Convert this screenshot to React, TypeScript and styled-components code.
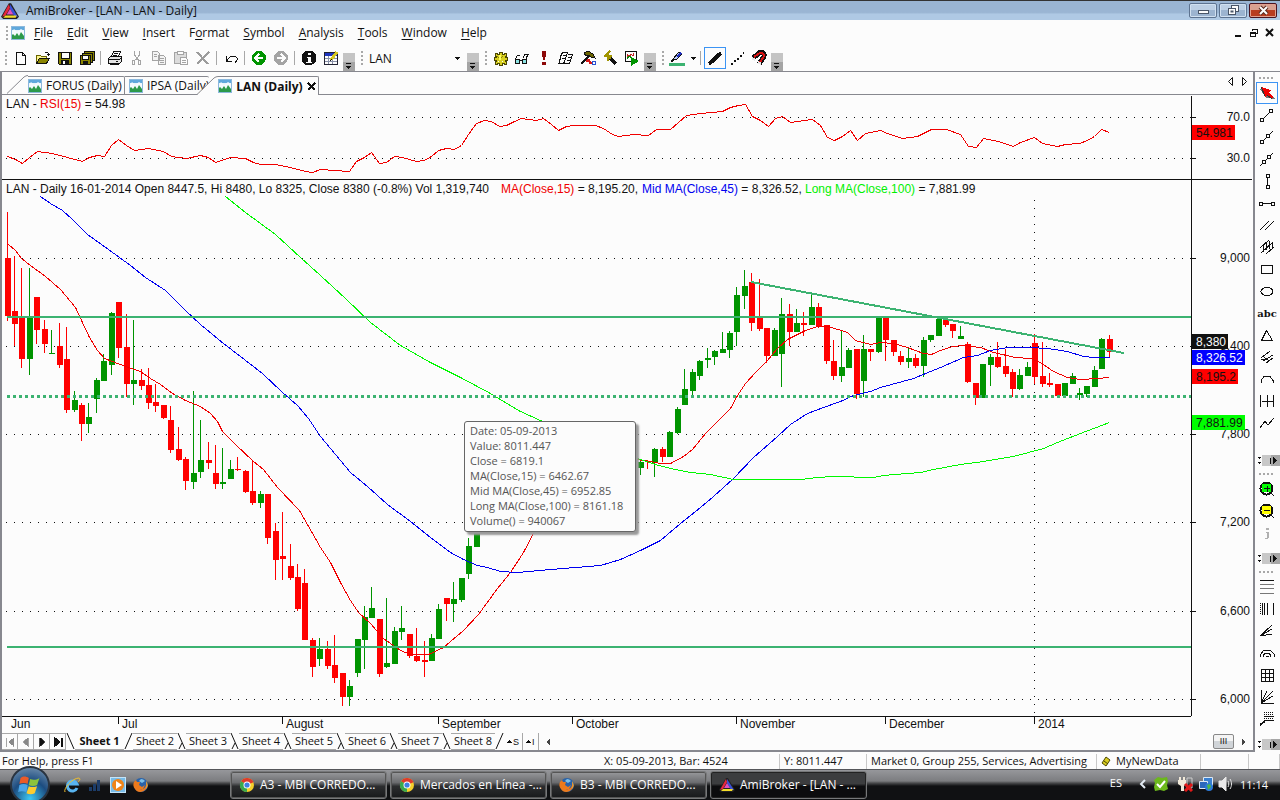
import { ReactNode, useState } from "react";
import styled, { createGlobalStyle } from "styled-components";

type Candle = [high: number, top: number, bottom: number, low: number, up: 0 | 1];

const menus = [
  ["", "F", "ile"],
  ["", "E", "dit"],
  ["", "V", "iew"],
  ["", "I", "nsert"],
  ["F", "o", "rmat"],
  ["", "S", "ymbol"],
  ["", "A", "nalysis"],
  ["", "T", "ools"],
  ["", "W", "indow"],
  ["", "H", "elp"],
];

const sheets = [1, 2, 3, 4, 5, 6, 7, 8].map((n) => `Sheet ${n}`);

// y of high, body top, body bottom, low; last value is 1 for an up day
const firstCandles: Candle[] = [
  [212, 258, 316, 321, 0], [256, 311, 324, 346, 0], [268, 317, 359, 368, 0], [268, 317, 359, 375, 1],
  [297, 297, 330, 344, 0], [320, 329, 344, 353, 0], [330, 353, 354, 354, 1], [323, 346, 365, 368, 0],
  [327, 359, 410, 413, 0], [391, 400, 410, 412, 1], [403, 405, 424, 441, 0], [403, 417, 424, 433, 1],
  [378, 380, 399, 413, 1], [354, 361, 381, 381, 1], [312, 313, 365, 375, 1], [302, 302, 348, 358, 0],
  [314, 347, 384, 397, 0], [320, 380, 384, 405, 1], [369, 380, 386, 390, 0], [368, 385, 403, 409, 0],
  [384, 402, 406, 412, 0], [405, 405, 418, 419, 0], [406, 420, 450, 453, 0], [427, 449, 460, 461, 0],
  [457, 459, 481, 490, 0], [391, 473, 482, 489, 1], [420, 460, 472, 478, 1], [442, 460, 463, 469, 0],
  [445, 473, 484, 489, 0], [448, 482, 484, 489, 1], [460, 469, 479, 479, 1], [457, 469, 470, 471, 0],
  [470, 471, 492, 493, 0], [460, 491, 503, 505, 0], [491, 494, 503, 508, 1], [494, 494, 538, 544, 0],
  [523, 531, 560, 580, 0], [512, 556, 559, 580, 0], [544, 566, 578, 580, 0], [564, 577, 609, 611, 0],
  [569, 583, 640, 640, 0], [638, 640, 667, 677, 0], [638, 649, 659, 666, 1], [641, 649, 666, 669, 0],
  [635, 665, 678, 683, 0], [673, 673, 697, 706, 0], [680, 686, 697, 706, 1], [639, 639, 673, 677, 1],
  [606, 617, 640, 669, 1], [587, 608, 618, 618, 1], [619, 619, 674, 677, 0], [598, 663, 667, 668, 1],
  [627, 631, 664, 664, 1], [606, 628, 632, 640, 1], [634, 634, 656, 658, 0], [628, 656, 661, 662, 0],
  [641, 660, 662, 677, 0], [634, 638, 661, 661, 1], [604, 609, 639, 639, 1], [598, 598, 604, 621, 0],
  [582, 599, 604, 622, 1], [578, 578, 600, 602, 1], [538, 546, 574, 579, 1], [500, 500, 547, 547, 1],
];

const lastCandles: Candle[] = [
  [460, 462, 468, 475, 1], [460, 461, 462, 469, 0], [448, 449, 463, 477, 1], [447, 449, 457, 462, 0],
  [431, 432, 457, 457, 1], [407, 409, 433, 434, 1], [369, 389, 405, 405, 1], [369, 372, 391, 396, 1],
  [360, 361, 376, 380, 1], [348, 358, 360, 368, 1], [350, 351, 357, 365, 1], [332, 349, 353, 353, 1],
  [331, 333, 350, 358, 1], [287, 295, 332, 346, 1], [270, 286, 296, 309, 1], [273, 282, 323, 331, 0],
  [279, 317, 329, 331, 0], [328, 328, 356, 363, 0], [328, 330, 356, 356, 1], [298, 314, 354, 387, 1],
  [304, 314, 332, 346, 0], [309, 323, 332, 332, 1], [312, 323, 325, 336, 0], [295, 307, 325, 325, 1],
  [303, 307, 327, 328, 0], [325, 325, 361, 364, 0], [340, 361, 376, 380, 0], [330, 367, 376, 382, 1],
  [348, 350, 368, 368, 1], [349, 349, 394, 399, 0], [335, 349, 381, 397, 1], [349, 349, 352, 361, 0],
  [318, 318, 352, 353, 1], [318, 318, 340, 361, 0], [340, 340, 352, 356, 0], [351, 356, 362, 365, 0],
  [347, 358, 362, 368, 1], [354, 358, 366, 368, 0], [337, 340, 366, 377, 1], [335, 335, 340, 342, 1],
  [319, 319, 336, 336, 1], [319, 319, 325, 327, 0], [324, 324, 331, 338, 0], [326, 336, 339, 339, 1],
  [342, 344, 382, 383, 0], [383, 383, 398, 405, 0], [364, 364, 398, 398, 1], [354, 357, 365, 386, 1],
  [342, 357, 367, 368, 0], [349, 366, 374, 377, 0], [369, 372, 389, 397, 0], [369, 375, 389, 390, 1],
  [362, 367, 376, 376, 1], [334, 343, 377, 384, 0], [342, 376, 384, 387, 0], [373, 383, 385, 387, 0],
  [384, 384, 396, 397, 0], [383, 383, 396, 396, 1], [373, 376, 384, 384, 1], [388, 393, 395, 400, 1],
  [386, 386, 394, 397, 1], [366, 370, 387, 387, 1], [338, 339, 369, 369, 1], [335, 339, 352, 357, 0],
];

const LAST_START = 85;

const ma15 =
  "8,244 15,250 21,258 30,265 45,276 60,289 75,307 82,322 89,337 97,350 104,358 112,361 125,366 140,371 150,378 160,384 172,393 185,400 200,406 210,413 217,421 222,431 235,444 253,461 263,469 277,487 299,510 320,547 330,562 340,582 350,600 358,612 370,623 383,638 400,650 410,654 428,654 443,647 463,630 478,614 497,588 510,572 523,552 534,531 560,490 600,462 636,459 650,461 660,463 670,463 683,456 692,449 705,433 720,418 730,408 737,395 745,383 755,372 767,360 777,348 787,339 805,330 817,326 828,326 847,332 855,340 870,344 880,342 893,343 907,347 923,353 931,354 940,350 952,346 963,345 980,347 993,352 1015,357 1030,358 1040,362 1053,371 1067,377 1080,379 1097,378 1109,377";
const ma45 =
  "40,196 50,203 62,210 72,219 82,229 87,234 108,249 130,265 145,277 165,290 185,310 200,324 223,343 240,356 262,373 282,392 297,405 308,418 320,436 340,460 350,472 367,486 387,504 410,521 430,537 450,552 463,559 477,565 487,567 500,571 517,572 550,569 600,565 620,559 640,550 660,540 680,523 700,507 713,496 733,478 753,457 777,436 790,424 807,413 823,407 840,401 853,395 870,391 880,387 913,378 930,371 940,367 963,357 977,355 990,350 1007,347 1030,347 1047,348 1067,351 1083,356 1093,357 1109,357";
const ma100 =
  "225,196 245,212 275,234 300,257 320,275 345,298 370,322 400,345 430,362 460,377 490,393 518,410 542,421 600,445 643,460 655,464 670,468 690,472 710,474 733,479 800,479 817,477 833,476 873,477 883,475 907,473 920,472 933,469 960,464 983,461 1013,456 1043,448 1057,442 1080,433 1109,422";
const rsi =
  "7,156 15,159 22,163 29,157 37,151 52,153 67,157 82,161 89,157 97,155 104,156 111,145 118,139 126,145 134,150 148,148 163,151 171,156 186,158 200,155 208,157 215,162 230,157 245,158 253,162 260,164 275,164 290,167 305,171 312,172 320,169 334,170 349,171 356,161 364,157 371,152 379,163 386,162 394,156 402,157 416,161 424,160 431,156 438,150 446,148 454,149 461,145 468,134 476,123 484,120 491,121 499,126 506,125 514,121 521,118 536,120 543,118 551,124 558,130 566,126 573,125 595,125 603,128 612,134 618,136 633,134 648,135 656,129 670,129 678,122 686,115 700,113 722,111 730,107 738,105 745,104 752,116 760,120 768,126 775,118 782,116 790,122 804,120 812,119 820,125 827,137 834,140 842,136 850,130 857,140 865,133 880,130 887,133 902,138 917,136 931,129 946,129 960,134 968,146 976,147 983,138 998,141 1013,146 1020,142 1034,137 1042,143 1057,146 1065,144 1079,143 1087,140 1094,136 1101,129 1109,132";

const priceLevels: [number, string][] = [
  [258, "9,000"],
  [346, "8,400"],
  [434, "7,800"],
  [522, "7,200"],
  [611, "6,600"],
  [699, "6,000"],
];

const months: [number, string][] = [
  [118, "Jul"],
  [282, "August"],
  [438, "September"],
  [572, "October"],
  [736, "November"],
  [885, "December"],
  [1034, "2014"],
];

const badges: [number, number, string, string, string][] = [
  [125, 43, "54.981", "#f00", "#111"],
  [334, 36, "8,380", "#111", "#fcfcfc"],
  [350, 53, "8,326.52", "#00f", "#fcfcfc"],
  [369, 46, "8,195.2", "#f00", "#111"],
  [415, 53, "7,881.99", "#0f0", "#111"],
];

const tipLines = [
  "Date: 05-09-2013",
  "Value: 8011.447",
  "Close = 6819.1",
  "MA(Close,15) = 6462.67",
  "Mid MA(Close,45) = 6952.85",
  "Long MA(Close,100) = 8161.18",
  "Volume() = 940067",
];

const Icon = ({ size = 16, children }: { size?: number; children: ReactNode }) => (
  <svg width={size} height={size} viewBox="0 0 16 16" fill="none" stroke="#111" shapeRendering="crispEdges" aria-hidden="true">
    {children}
  </svg>
);

const ChartIcon = () => (
  <svg width="14" height="14" viewBox="0 0 14 14" aria-hidden="true">
    <rect x=".5" y=".5" width="13" height="13" fill="#e8f4fb" stroke="#8cb8dc" />
    <path d="M1 1h12v3H1z" fill="#5fa8dc" />
    <path d="M1 6l2-3 3 3 4-3 3 2v5H1z" fill="#f4fafe" />
    <path d="M1 13V9l1-1 2 2 2-3 2 3 2-4 3 4v3z" fill="#2c9a4b" />
  </svg>
);

const Prism = ({ size = 16 }: { size?: number }) => (
  <svg width={size} height={size} viewBox="0 0 16 16" aria-hidden="true">
    <path d="M7 1h2l7 12-2 2H2l-2-2z" fill="#222" />
    <path d="M7 2L1 13l3-1 4-7z" fill="#e8283c" />
    <path d="M8 2l7 11h-3L8 6z" fill="#3a50d8" />
    <path d="M2 14l2-2h10l-1 2z" fill="#f4dc28" />
    <path d="M8 6l3 5H5z" fill="#e050c0" />
  </svg>
);

const Chrome = () => (
  <svg width="16" height="16" viewBox="0 0 16 16" aria-hidden="true">
    <circle cx="8" cy="8" r="7" fill="#f6cf2a" />
    <path d="M8 8L2 4.300a7 7 0 0 1 12.500 1z" fill="#de3b2c" />
    <path d="M8 8v7A7 7 0 0 1 2 4.300z" fill="#39a84e" />
    <circle cx="8" cy="8" r="3.500" fill="#fff" />
    <circle cx="8" cy="8" r="2.600" fill="#3f7fe0" />
  </svg>
);

const Firefox = () => (
  <svg width="16" height="16" viewBox="0 0 16 16" aria-hidden="true">
    <circle cx="8" cy="8" r="7" fill="#2a62a8" />
    <path d="M8 2a5 5 0 0 1 4 2L9 6 6 4z" fill="#7cc0ea" />
    <path d="M1 5l2-2 1 2 3 0-1 3 3 2 3-2-2 4-3 0c4 1 7-2 6-8 2 3 2 6 0 8-3 4-9 4-11 0C0 10 0 7 1 5z" fill="#ec7a1c" />
    <path d="M13 4c2 3 2 6 0 8 1-2 1-5 0-8z" fill="#f8c43c" />
  </svg>
);

const Overflow = () => (
  <OverflowButton aria-label="Toolbar options">
    <svg width="8" height="8" viewBox="0 0 8 8" shapeRendering="crispEdges">
      <path d="M1 0h5v1H1zM1 3h5v1H5v1H4v1H3V5H2V4H1z" fill="#111" />
    </svg>
  </OverflowButton>
);

const ToolboxOverflow = () => (
  <ToolboxMore aria-label="Toolbox options">
    <svg width="24" height="11" viewBox="0 0 24 11" shapeRendering="crispEdges">
      <path d="M6 0h9v11H6z" fill="#c8c8c8" />
      <path d="M15 0h9v11h-9z" fill="#a6a6a6" />
      <path d="M2 2h3v1H4v1H3V3H2zM2 7h3v1H4v1H3V8H2zM14 3h1v6h-1zM17 2h1v1h1v1h1v1h1v1h-1v1h-1v1h-1v1h-1z" fill="#111" />
    </svg>
  </ToolboxMore>
);

const fileTools: [string, ReactNode][] = [
  ["New", <path d="M3.500 2.500h6l3 3v9h-9zM9.500 2.500v3h3" />],
  ["Open", <g><path d="M1.500 13.500v-8h4l1 1h5v2" fill="#fcf48c" stroke="#6a6400" /><path d="M1.500 13.500l3-5h10l-3 5z" fill="#8a8400" /><path d="M9.500 3.500l1-1h2l1 1v2M11.500 4.500h3" /></g>],
  ["Save", <g><path d="M1.500 2.500h13v12h-12l-1-1z" fill="#8a8400" /><path d="M4.500 2.500h8v6h-8z" fill="#fcfcfc" /><path d="M4.500 10.500h7v4h-7z" fill="#111" /><path d="M6 11h2v3H6z" fill="#fcfcfc" stroke="none" /></g>],
  ["Save all", <g fill="#8a8400"><path d="M5.500 1.500h10v9h-10z" /><path d="M3.500 3.500h10v9h-10z" /><path d="M1.500 5.500h10v9h-10z" /><path d="M3.500 5.500h6v4h-6z" fill="#fcfcfc" /><path d="M4.500 11.500h4v3h-4z" fill="#111" /></g>],
];

const editTools: [string, ReactNode][] = [
  ["Print", <g><path d="M4.500 6.500l2-5h7l-2 5M7 3.500h4M6 5.500h4" /><path d="M1.500 8.500l2-2h11v5l-2 2h-11z" fill="#e4e4e4" /><path d="M1.500 9.500h11l2-2M3.500 13.500v1h8v-1M9 11.500h2" /></g>],
  ["Cut", <path stroke="#a4a4a4" d="M5.500 1v4l4 5M10.500 1v4l-4 5M3.500 10.500h2v4h-2zM9.500 10.500h2v4h-2z" />],
  ["Copy", <path stroke="#a4a4a4" fill="#f4f4f4" d="M1.500 1.500h5l2 2v7h-7zM7.500 5.500h5l2 2v7h-7zM3 4.500h3M3 6.500h3M9 8.500h4M9 10.500h4M9 12.500h4" />],
  ["Paste", <g stroke="#a4a4a4"><path d="M1.500 2.500h12v11h-12z" fill="#dcdcdc" /><path d="M4.500 1.500h6v3h-6z" fill="#fcfcfc" /><path d="M7.500 7.500h5l2 2v5h-7zM9 10.500h4M9 12.500h4" fill="#fcfcfc" /></g>],
  ["Delete", <path stroke="#9c9c9c" strokeWidth="2" d="M2 2l11 12M14 2L2 14" />],
];

const infoTools: [string, ReactNode][] = [
  ["Information", <g><circle cx="8" cy="8" r="7" fill="#111" /><path d="M7 3h3v2H7zM6 7h4v5h1v1H5v-1h2V8H6z" fill="#fcfcfc" stroke="none" /></g>],
  ["Quote editor", <g><path d="M1.500 2.500h13v12h-13z" fill="#fcfcfc" stroke="#223" /><path d="M2 3h12v3H2z" fill="#1d34c0" stroke="none" /><path d="M5.500 6v8M9.500 6v8M2 8.500h12M2 11.500h12" stroke="#8890a8" /><path d="M8 10l6-8" stroke="#d8c820" strokeWidth="3" /><path d="M7 11l2-2" /></g>],
];

const analysisTools: [string, ReactNode][] = [
  ["Settings", <g><path d="M7 2h3v2h2V3h2v3h-1v1h2v3h-2v1h1v3h-2v-1h-2v2H7v-2H5v1H3v-3h1v-1H2V7h2V6H3V3h2v1h2z" fill="#d8d020" stroke="#4a4600" /><path d="M5 6l3 3M11 6l-3 3" stroke="#8a8400" /><path d="M8 5v5" stroke="#fcfc60" strokeWidth="2" /><path d="M6 11h1v1H6zM10 11h1v1h-1z" fill="#fcfcfc" stroke="none" /></g>],
  ["Explore", <g fill="#8ce4e4"><path d="M1.500 9.500h4v4h-4zM8.500 9.500h4v4h-4z" /><path d="M6 10.500h2M1.500 9l2-4h2M9 8l2-4h2v2M12 9l2-5h1" fill="none" /></g>],
  ["Commentary", <path d="M6 1h4v3L9 10H7L6 4zM6 12h4v3H6z" fill="#8c0808" stroke="none" />],
  ["Report", <path d="M3.500 3.500l2-1h4l-3 9-2 2H1zM9.500 4.500h5l-3 9H5l2-2M5 5.500h3M4 8.500h3M10 7.500h3M9 10.500h3" fill="#fcfcfc" />],
  ["Formula", <g><path d="M4 3l4-2 5 3 2 4-4-1-3-2-2 1z" fill="#6a6400" /><path d="M9 6l-8 8" strokeWidth="2" /><path d="M6 11l3-1 1 3h3" stroke="#d81818" strokeWidth="2" /><path d="M12.500 11.500h3v3h-3z" stroke="#2850d0" /></g>],
  ["Wizard", <g><path d="M7 7l7 7" strokeWidth="3" /><path d="M6 3v8M2 6h8M4 4l5 5M8 1l-3 3" stroke="#a09400" strokeWidth="2" /></g>],
  ["Run", <g><path d="M1.500 1.500h11v10h-11z" fill="#fcfcfc" /><path d="M3 7V4l2 3 2-3 2 2 1-3" stroke="#c02020" /><path d="M3 9l2-3 3 2" stroke="#008c00" /><path d="M7 7l8 4-8 5z" fill="#009400" stroke="none" /></g>],
];

const handle = (x: number, y: number) => <rect x={x - 1.5} y={y - 1.5} width="3" height="3" fill="#fcfcfc" />;

const drawTools: [string, ReactNode][] = [
  ["Select", <g><path d="M5 3l10 11M2 4l7 9" stroke="#777" strokeWidth="2" /><path d="M2 2l10 3-2 3 4 4-2 2-4-4-2 2z" fill="#f00000" stroke="none" /><path d="M2 2l4 9M8 10l5 4" stroke="#333" /></g>],
  ["Trend line", <g><path d="M3 13l9-9" />{handle(3, 13)}{handle(12, 4)}</g>],
  ["Ray", <g><path d="M3 13L14 2" />{handle(3, 13)}{handle(9, 7)}</g>],
  ["Extended line", <g><path d="M1 15L14 2" />{handle(5, 11)}{handle(10, 6)}</g>],
  ["Vertical line", <g><path d="M8.500 2v12" />{handle(9, 3)}{handle(9, 14)}</g>],
  ["Horizontal line", <g><path d="M2 8.500h12" />{handle(2, 9)}{handle(14, 9)}</g>],
  ["Parallel lines", <path d="M1 13L10 4M6 13l9-9" />],
  ["Regression channel", <path d="M1 9l9-8M2 14L14 3M7 15l8-7M4 6v7M7 4v7M10 2v8M13 3v7" />],
  ["Rectangle", <path d="M2.500 4.500h11v8h-11z" />],
  ["Ellipse", <ellipse cx="8" cy="8.500" rx="6" ry="4" />],
  ["Text", null],
  ["Triangle", <path d="M2.500 13.500l5-10 6 10z" />],
  ["Pitchfork", <path d="M2 9l9-7M2 10.500h5M4 12l10-6M7 14l7-5M5 8l5 4" />],
  ["Arc", <path d="M2 11.500V9.500l3-4h6l3 4v2" />],
  ["Cycles", <path d="M1.500 2v12M8.500 2v12M14.500 2v12M3 8.500h5M9 8.500h5" strokeDasharray="12 0" />],
  ["Zig zag", <path d="M1 13l5-7 3 4 6-7" />],
];

const zoomTools: [string, ReactNode][] = [
  ["Zoom in", <g><circle cx="7.500" cy="7.500" r="6" strokeWidth="2" /><rect x="3" y="3" width="9" height="8" fill="#0f0" stroke="none" /><path d="M5 7.500h6M8 4.500v6M12 12l3 3" /></g>],
  ["Zoom out", <g><circle cx="7.500" cy="7.500" r="6" strokeWidth="2" /><rect x="3" y="3" width="9" height="8" fill="#ff0" stroke="none" /><path d="M5 7.500h6M12 12l3 3" /></g>],
  ["Inspect", <path d="M7 3h3v2H7zM7 7h3v5l-1 2H6v-1h2V8H7z" fill="#b0b0b0" stroke="none" />],
];

const fibTools: [string, ReactNode][] = [
  ["Retracement", <g><path d="M1 1.500h14" /><path d="M1 5.500h14M1 9.500h14M1 14.500h14" stroke="#777" /></g>],
  ["Time zones", <g><path d="M1.500 2v12" strokeDasharray="1 1" /><path d="M3.500 2v12M5.500 2v12M8.500 2v12M14.500 2v12" /></g>],
  ["Fan", <path d="M1 13L13 2M1 13l12-7M1 13l12-2" />],
  ["Arcs", <path d="M1.500 12V9.500l3-4h7l4 4V12M4.500 12v-2l2-2h3l2 2v2M7.500 12v-1h2v1" />],
  ["Gann square", <path d="M2.500 2.500h12v12h-12zM6.500 2v12M10.500 2v12M2 6.500h12M2 10.500h12" />],
  ["Gann fan", <path d="M2.500 1v13.500H15M2 14L14 2M2 14L8 2M2 14l12-7" />],
  ["Callout", <g><path d="M5 1.500h10M5 3.500h10M5 7.500h10" strokeDasharray="1 1" /><path d="M5 5.500h10M5 9.500h10" /><path d="M1 14l5-4" strokeWidth="2" /></g>],
];

const Tools = ({ items }: { items: [string, ReactNode][] }) => (
  <>
    {items.map(([name, art]) => (
      <ToolButton key={name} aria-label={name} $active={name === "Select"}>
        {art ? <Icon>{art}</Icon> : <Abc>abc</Abc>}
      </ToolButton>
    ))}
  </>
);

const CandleBars = ({ data, start }: { data: Candle[]; start: number }) => (
  <>
    {data.map(([high, top, bottom, low, up], i) => {
      const x = Math.floor(7 + (start + i) * 7.448);
      return (
        <g key={i} fill={up ? "#009400" : "#f00"}>
          <rect x={x} y={high} width="1" height={Math.max(1, low - high)} />
          <rect x={x - 2} y={top} width="6" height={Math.max(1, bottom - top)} />
        </g>
      );
    })}
  </>
);

const Chart = () => (
  <ChartSvg viewBox="2 95 1251 638" role="img" aria-label="LAN daily price chart">
    <g stroke="#111" strokeDasharray="1 7" shapeRendering="crispEdges">
      {[117, 158, ...priceLevels.map(([y]) => y)].map((y) => (
        <path key={y} d={`M6 ${y}.500H1191`} />
      ))}
      <path d="M1034.500 200V716" />
    </g>
    <g shapeRendering="crispEdges">
      <CandleBars data={firstCandles} start={0} />
      <CandleBars data={lastCandles} start={LAST_START} />
      <g fill="none" transform="translate(.5 .5)">
        <polyline points={rsi} stroke="#f00000" />
        <polyline points={ma15} stroke="#f00000" />
        <polyline points={ma45} stroke="#0000f0" />
        <polyline points={ma100} stroke="#00f800" />
      </g>
      <g stroke="#3cb371" strokeWidth="2">
        <path d="M7 317H1191M7 647H1191M751 282L1124 353" />
        <path d="M7 396.500H1191" strokeWidth="3" strokeDasharray="3 3" />
      </g>
      <g stroke="#111">
        <path d="M1191.500 96V716M2 179.500H1252M2 716.500H1191" />
        {[117, 158, ...priceLevels.map(([y]) => y)].map((y) => (
          <path key={y} d={`M1192 ${y}.500h4`} />
        ))}
        {months.map(([x]) => (
          <path key={x} d={`M${x}.500 717v7`} />
        ))}
      </g>
    </g>
    <text x="6" y="108">
      LAN - <tspan fill="#f00000">RSI(15)</tspan> = 54.98
    </text>
    <text x="6" y="193">LAN - Daily 16-01-2014 Open 8447.5, Hi 8480, Lo 8325, Close 8380 (-0.8%) Vol 1,319,740</text>
    <text x="501" y="193"><tspan fill="#f00000">MA(Close,15)</tspan> = 8,195.20,</text>
    <text x="642" y="193"><tspan fill="#0000f0">Mid MA(Close,45)</tspan> = 8,326.52,</text>
    <text x="805" y="193"><tspan fill="#00f000">Long MA(Close,100)</tspan> = 7,881.99</text>
    <g textAnchor="end">
      <text x="1250" y="121">70.0</text>
      <text x="1250" y="162">30.0</text>
      {priceLevels.map(([y, label]) => (
        <text key={label} x="1250" y={y + 4}>{label}</text>
      ))}
    </g>
    {badges.map(([y, width, label, bg, color]) => (
      <g key={label}>
        <rect x="1192" y={y} width={width} height="15" fill={bg} />
        <text x="1196" y={y + 12} fill={color}>{label}</text>
      </g>
    ))}
    <text x="11" y="728">Jun</text>
    {months.map(([x, label]) => (
      <text key={label} x={x + 4} y="728">{label}</text>
    ))}
  </ChartSvg>
);

const SheetEdge = ({ kind }: { kind: "left" | "right" | "both" }) => (
  <svg width="9" height="17" viewBox="0 0 9 17" stroke="#111" fill="none" aria-hidden="true">
    {kind !== "right" && <path d="M1 0l7 16" />}
    {kind === "right" && <path d="M8 0L1 16" />}
    {kind === "both" && <path d="M5 10L2 16" />}
  </svg>
);

export default function App() {
  const [sheet, setSheet] = useState(0);

  return (
    <Window>
      <GlobalStyle />
      <TitleBar>
        <Prism size={18} />
        <Title>AmiBroker - [LAN - LAN - Daily]</Title>
        <CaptionButton aria-label="Minimize">
          <svg width="13" height="11" viewBox="0 0 13 11"><rect x="1.500" y="5.500" width="10" height="3" fill="#fcfcfc" stroke="#4a5668" /></svg>
        </CaptionButton>
        <CaptionButton aria-label="Restore">
          <svg width="13" height="11" viewBox="0 0 13 11" fill="#fcfcfc" stroke="#4a5668"><rect x="4.500" y=".5" width="7" height="6" /><rect x="1.500" y="3.500" width="7" height="6" /><rect x="4" y="6" width="2" height="1" /></svg>
        </CaptionButton>
        <CaptionButton aria-label="Close" $danger>
          <svg width="13" height="11" viewBox="0 0 13 11"><path d="M3 2l7 7M10 2L3 9" stroke="#5a2a20" strokeWidth="4" /><path d="M3 2l7 7M10 2L3 9" stroke="#fcfcfc" strokeWidth="2" /></svg>
        </CaptionButton>
      </TitleBar>

      <MenuBar>
        <Grip />
        <ChartIcon />
        <MenuList>
          {menus.map(([before, key, after]) => (
            <MenuButton key={after}>{before}<u>{key}</u>{after}</MenuButton>
          ))}
        </MenuList>
        <MdiButton aria-label="Minimize chart"><svg width="10" height="10" viewBox="0 0 10 10" stroke="#111" strokeWidth="2"><path d="M2 8h6" /></svg></MdiButton>
        <MdiButton aria-label="Restore chart"><svg width="10" height="10" viewBox="0 0 10 10" fill="none" stroke="#111" shapeRendering="crispEdges"><path d="M3.500 3V1.500h5v4H7M3 1.500h6M1.500 4.500h5v4h-5zM1 5.500h6" /></svg></MdiButton>
        <MdiButton aria-label="Close chart"><svg width="10" height="10" viewBox="0 0 10 10" stroke="#111" strokeWidth="2"><path d="M1 1l7 7M8 1L1 8" /></svg></MdiButton>
      </MenuBar>

      <ToolBar>
        <Grip />
        <Tools items={fileTools} />
        <Separator />
        <Tools items={editTools} />
        <Separator />
        <ToolButton aria-label="Undo"><Icon><path d="M3.500 6v5.500H9M4 11l1-2 3-3h4l2 2v2l-2 3" /></Icon></ToolButton>
        <Separator />
        <ToolButton aria-label="Back"><Icon><circle cx="8" cy="8" r="7" fill="#009400" stroke="none" /><path d="M12 8H5M8 4L4 8l4 4" stroke="#fcfcfc" strokeWidth="2" /></Icon></ToolButton>
        <ToolButton aria-label="Forward"><Icon><circle cx="8" cy="8" r="7" fill="#a4a4a4" stroke="none" /><path d="M4 8h7M8 4l4 4-4 4" stroke="#fcfcfc" strokeWidth="2" /></Icon></ToolButton>
        <Separator />
        <Tools items={infoTools} />
        <Overflow />
        <Grip />
        <SymbolBox>
          <select aria-label="Symbol" defaultValue="LAN">
            <option>LAN</option>
          </select>
          <Arrow />
        </SymbolBox>
        <Overflow />
        <Grip />
        <Tools items={analysisTools} />
        <Overflow />
        <Grip />
        <ToolButton aria-label="Line colour"><Icon><path d="M4 9l6-7 3 2-6 6z" fill="#b8c8f8" /><path d="M8 7l4-4" stroke="#2030c0" strokeWidth="2" /><path d="M2 11l3-1" strokeWidth="2" /><path d="M0 14.500h16" stroke="#3cb371" strokeWidth="3" /></Icon></ToolButton>
        <ArrowButton aria-label="Choose colour"><Arrow /></ArrowButton>
        <Separator />
        <ToolButton aria-label="Thick line" $active><Icon><path d="M2 14L14 3" strokeWidth="4" /></Icon></ToolButton>
        <ToolButton aria-label="Dotted line"><Icon><path d="M2 13h2v2H2zM5 10h2v2H5zM8 8h2v2H8zM11 5h2v2h-2zM14 2h1v2h-1z" fill="#111" stroke="none" /></Icon></ToolButton>
        <ToolButton aria-label="Magnet"><Icon><path d="M2 8l5-4c4-4 8 0 5 4l-4 6" strokeWidth="5" /><path d="M3 7l4-3c4-3 7 0 5 4l-3 4" stroke="#d81010" strokeWidth="2" /><path d="M1 8l3 2M7 12l3 2" stroke="#e8e8e8" strokeWidth="2" /></Icon></ToolButton>
        <Overflow />
      </ToolBar>

      <Main>
        <Document>
          <DocTabs>
            <DocTab>
              <Slant />
              <TabFace><ChartIcon />FORUS (Daily)</TabFace>
            </DocTab>
            <DocTab>
              <TabFace $second><ChartIcon />IPSA (Daily)</TabFace>
            </DocTab>
            <DocTab $active>
              <Slant />
              <TabFace><ChartIcon />LAN (Daily)
                <svg width="9" height="9" viewBox="0 0 9 9" stroke="#111" strokeWidth="2" shapeRendering="crispEdges" aria-hidden="true"><path d="M1 1l7 7M8 1L1 8" /></svg>
              </TabFace>
            </DocTab>
            <TabArrows>
              <button aria-label="Previous tab"><svg width="7" height="9" viewBox="0 0 7 9" fill="none" stroke="#111"><path d="M5.500 .5v8l-4-4z" /></svg></button>
              <button aria-label="Next tab"><svg width="7" height="9" viewBox="0 0 7 9" fill="none" stroke="#111"><path d="M1.500 .5v8l4-4z" /></svg></button>
            </TabArrows>
          </DocTabs>

          <ChartArea>
            <Chart />
            <DataTip>
              {tipLines.map((line) => <p key={line}>{line}</p>)}
            </DataTip>
          </ChartArea>

          <SheetBar>
            <NavButton aria-label="First sheet" disabled><Icon size={12}><path d="M3 2v12M13 2L6 8l7 6z" fill="#888" stroke="#888" /></Icon></NavButton>
            <NavButton aria-label="Previous sheet" disabled><Icon size={12}><path d="M11 2L4 8l7 6z" fill="#888" stroke="#888" /></Icon></NavButton>
            <NavButton aria-label="Next sheet"><Icon size={12}><path d="M5 2l7 6-7 6z" fill="#111" /></Icon></NavButton>
            <NavButton aria-label="Last sheet"><Icon size={12}><path d="M3 2l7 6-7 6zM13 2v12" fill="#111" strokeWidth="2" /></Icon></NavButton>
            <SheetEdge kind="left" />
            {sheets.map((name, i) => (
              <SheetCell key={name}>
                <SheetTab $active={i === sheet} onClick={() => setSheet(i)}>{name}</SheetTab>
                <SheetEdge kind={i === sheet || i === sheets.length - 1 ? "right" : "both"} />
              </SheetCell>
            ))}
            <SortButton><Arrow up />S</SortButton>
            <SortButton><Arrow up />I</SortButton>
            <ScrollTrack>
              <button aria-label="Scroll left"><Icon size={10}><path d="M11 3L5 8l6 5z" fill="#444" stroke="none" /></Icon></button>
              <ScrollThumb>III</ScrollThumb>
              <button aria-label="Scroll right"><Icon size={10}><path d="M5 2l6 6-6 6z" fill="#444" stroke="none" /></Icon></button>
            </ScrollTrack>
          </SheetBar>
        </Document>

        <Toolbox>
          <ToolGroup $grow>
            <Dots />
            <Tools items={drawTools} />
            <ToolboxOverflow />
          </ToolGroup>
          <ToolGroup>
            <Dots />
            <Tools items={zoomTools} />
            <ToolboxOverflow />
          </ToolGroup>
          <ToolGroup>
            <Dots />
            <Tools items={fibTools} />
            <ToolboxOverflow />
          </ToolGroup>
        </Toolbox>
      </Main>

      <StatusBar>
        <StatusHelp>For Help, press F1</StatusHelp>
        <StatusCell $width={180}>X: 05-09-2013, Bar: 4524</StatusCell>
        <StatusCell $width={87}>Y: 8011.447</StatusCell>
        <StatusCell $width={230}>Market 0, Group 255, Services, Advertising</StatusCell>
        <StatusCell $width={104}>
          <svg width="10" height="11" viewBox="0 0 10 11" aria-hidden="true"><path d="M5 1l4 3-4 6-4-3z" fill="#d8cc20" stroke="#4a4600" /><path d="M3 5l4 3" stroke="#4a4600" /></svg>
          MyNewData
        </StatusCell>
        <StatusCell $width={48} />
        <StatusCell $width={31} />
      </StatusBar>

      <TaskBar>
        <StartButton aria-label="Start">
          <svg width="26" height="26" viewBox="0 0 22 22">
            <path d="M3 5c3-2 5-1 7 0L9 10c-2-1-4-1-7 0z" fill="#ea5a28" />
            <path d="M11 6c3 1 5 1 8-1l-2 6c-2 1-5 1-7 0z" fill="#8cc43c" />
            <path d="M2 11c2-1 5-1 7 0l-1 6c-3-1-5-1-7 0z" fill="#4aa4e8" />
            <path d="M10 12c2 1 4 1 7 0l-2 6c-2 1-5 1-7 0z" fill="#fccc30" />
          </svg>
        </StartButton>
        <QuickLaunch>
          <button aria-label="Internet Explorer">
            <svg width="18" height="18" viewBox="0 0 18 18" fill="none"><path d="M14 12a5 5 0 1 1 0-4H5" stroke="#58b4f0" strokeWidth="3" /><path d="M2 16C0 13 9 2 16 2c2 1 0 3-1 4" stroke="#f0c030" strokeWidth="1" /></svg>
          </button>
          <button aria-label="Network meter">
            <svg width="14" height="14" viewBox="0 0 14 14" fill="#1c3c68"><path d="M1 9h3v4H1zM5 6h3v7H5zM9 2h3v11H9z" /></svg>
          </button>
          <button aria-label="Media Player">
            <svg width="16" height="16" viewBox="0 0 16 16"><rect x=".5" y=".5" width="15" height="15" fill="#78bce8" stroke="#c4e4f8" /><circle cx="8" cy="8" r="6" fill="#f08418" /><path d="M6 4l6 4-6 4z" fill="#fff" /></svg>
          </button>
          <button aria-label="Firefox"><Firefox /></button>
        </QuickLaunch>
        <TaskList>
          <TaskButton><Chrome />A3 - MBI CORREDO...</TaskButton>
          <TaskButton><Chrome />Mercados en Línea -...</TaskButton>
          <TaskButton><Firefox />B3 - MBI CORREDO...</TaskButton>
          <TaskButton $active><Prism />AmiBroker - [LAN - ...</TaskButton>
        </TaskList>
        <Language>ES</Language>
        <Tray $first>
          <svg width="8" height="10" viewBox="0 0 8 10" fill="none" stroke="#e4ecf4" strokeWidth="2"><path d="M6 1L2 5l4 4" /></svg>
          <svg width="16" height="16" viewBox="0 0 16 16"><path d="M1 4l4-3 4 1 5-1 1 4-1 4 1 4-4 2-4-1-5 1-1-4 1-4z" fill="#6cb81c" /><path d="M4 8l3 3 5-6" stroke="#fff" strokeWidth="2" fill="none" /></svg>
        </Tray>
        <Tray>
          <svg width="17" height="16" viewBox="0 0 17 16"><path d="M2 1h2v3H2zM6 1h2v3H6zM1 4h8v4l-2 2v5H4v-5L1 8z" fill="#f0e8d8" /><path d="M10 2h5v10h-5z" fill="none" stroke="#ccc" /><path d="M8 8l7 7M15 8l-7 7" stroke="#e01818" strokeWidth="3" /></svg>
          <svg width="16" height="16" viewBox="0 0 16 16"><path d="M5.500 1.500h9v8h-9z" fill="#3a80d0" stroke="#dce8f4" /><path d="M1.500 5.500h8v7h-8z" fill="#2c68bc" stroke="#dce8f4" /><circle cx="11" cy="11" r="4" fill="#2c7ad8" /><path d="M9 9l3-1 1 3-3 3z" fill="#4cb848" /></svg>
          <svg width="16" height="16" viewBox="0 0 16 16" fill="none" stroke="#e8e8e8"><path d="M1 5h3l4-4v14l-4-4H1z" fill="#e8e8e8" /><path d="M10 5c1 2 1 4 0 6M12 3c2 3 2 7 0 10" /></svg>
        </Tray>
        <Clock>11:14</Clock>
      </TaskBar>
    </Window>
  );
}

const Arrow = ({ up }: { up?: boolean }) => (
  <svg width="5" height="3" viewBox="0 0 5 3" fill="#111" shapeRendering="crispEdges" aria-hidden="true">
    <path d={up ? "M2 0h1v1h1v1h1v1H0V2h1V1h1z" : "M0 0h5v1H4v1H3v1H2V2H1V1H0z"} />
  </svg>
);

const Slant = () => (
  <svg width="21" height="19" viewBox="0 0 21 19" aria-hidden="true">
    <path d="M0 19L17 2Q19 .5 21 .5V19z" fill="#fcfcfc" />
    <path d="M0 18.500L17 2Q19 .5 21 .5" fill="none" stroke="#87888f" />
  </svg>
);

const GlobalStyle = createGlobalStyle`
  * {
    box-sizing: border-box;
  }

  body {
    margin: 0;
    background: #fcfcfc;
    color: #111;
    font: 12px "Open Sans", "Noto Sans", sans-serif;
  }

  button,
  select {
    appearance: none;
    background: none;
    border: 0;
    color: inherit;
    font: inherit;
    margin: 0;
    padding: 0;
  }

  svg {
    display: block;
    flex: none;
  }
`;

const Window = styled.div`
  display: flex;
  flex-direction: column;
  min-height: 100vh;
`;

const TitleBar = styled.header`
  display: flex;
  align-items: center;
  height: 20px;
  padding: 0 3px 0 1px;
  gap: 2px;
  background: linear-gradient(#9ab5d3 0 60%, #afc9e4 70%);
  border-top: 1px solid #333;
`;

const Title = styled.h1`
  flex: 1;
  margin: 0;
  padding-left: 5px;
  font-size: 12px;
  font-weight: 400;
`;

const CaptionButton = styled.button<{ $danger?: boolean }>`
  display: flex;
  align-items: center;
  justify-content: center;
  width: 28px;
  height: 15px;
  border: 1px solid ${(p) => (p.$danger ? "#4a1420" : "#5d7390")};
  border-radius: 2px;
  box-shadow: inset 0 0 0 1px ${(p) => (p.$danger ? "#e0a090" : "#d0e0f0")};
  background: ${(p) =>
    p.$danger ? "linear-gradient(#d8a090 50%, #b83c20 50%)" : "linear-gradient(#bccfe4 50%, #9cb4d0 50%)"};
`;

const MenuBar = styled.nav`
  display: flex;
  align-items: center;
  height: 25px;
  padding: 0 2px 0 5px;
`;

const MenuList = styled.div`
  display: flex;
  flex: 1;
  padding-left: 2px;
`;

const MenuButton = styled.button`
  padding: 0 7px;

  u {
    text-underline-offset: 2px;
  }
`;

const MdiButton = styled.button`
  display: flex;
  justify-content: center;
  width: 16px;
`;

const Grip = styled.span`
  flex: none;
  width: 2px;
  height: 14px;
  margin: 0 3px 0 1px;
  background: repeating-linear-gradient(#a8a8a8 0 2px, transparent 2px 4px);
`;

const ToolBar = styled.div`
  display: flex;
  align-items: center;
  height: 26px;
  padding-left: 4px;

  ${Grip} ~ ${Grip} {
    margin: 0 2px 0 6px;
  }
`;

const ToolButton = styled.button<{ $active?: boolean }>`
  display: flex;
  flex: none;
  align-items: center;
  justify-content: center;
  width: 22px;
  height: 22px;
  border: 1px solid ${(p) => (p.$active ? "#3c94f4" : "transparent")};
`;

const Abc = styled.span`
  font: bold 10px "DejaVu Serif", serif;
`;

const ArrowButton = styled.button`
  display: flex;
  justify-content: center;
  width: 10px;
`;

const Separator = styled.span`
  flex: none;
  width: 1px;
  height: 14px;
  margin: 0 3px 0 2px;
  background: #a8a8a8;
`;

const OverflowButton = styled.button`
  display: flex;
  flex: none;
  align-self: flex-end;
  align-items: flex-end;
  justify-content: center;
  width: 12px;
  height: 18px;
  margin-left: 1px;
  background: linear-gradient(#c4c4c4 50%, #a4a4a4 50%);
`;

const SymbolBox = styled.label`
  display: flex;
  align-items: center;
  width: 101px;
  padding-right: 6px;

  select {
    flex: 1;
    padding-left: 4px;
  }
`;

const Main = styled.main`
  display: flex;
  flex: 1;
  border-top: 1px solid #87888f;
`;

const Document = styled.section`
  display: flex;
  flex: 1;
  flex-direction: column;
  min-width: 0;
  border-left: 2px solid #87888f;
  border-bottom: 2px solid #87888f;
`;

const DocTabs = styled.div`
  display: flex;
  align-items: flex-end;
  height: 23px;
  padding-left: 5px;
  border-bottom: 1px solid #87888f;
`;

const DocTab = styled.button<{ $active?: boolean }>`
  display: flex;
  align-items: flex-end;
  height: 18px;
  font-weight: ${(p) => (p.$active ? 700 : 400)};

  ${(p) =>
    p.$active &&
    `
    z-index: 1;
    height: 19px;
    margin: 0 0 -1px -12px;
  `}
`;

const TabFace = styled.span<{ $second?: boolean }>`
  display: flex;
  align-items: center;
  gap: 4px;
  height: 100%;
  padding: 0 ${(p) => (p.$second ? 0 : 2)}px 0 ${(p) => (p.$second ? 4 : 0)}px;
  background: #fcfcfc;
  border-top: 1px solid #87888f;
  border-right: ${(p) => (p.$second ? 0 : 1)}px solid #87888f;
  border-radius: 0 2px 0 0;
  white-space: nowrap;
`;

const TabArrows = styled.div`
  display: flex;
  gap: 7px;
  margin-left: auto;
  padding: 0 5px 8px 0;
`;

const ChartArea = styled.div`
  position: relative;
  flex: 1;
`;

const ChartSvg = styled.svg`
  width: 100%;
  height: auto;
  fill: #111;
  font: 12px "Liberation Sans", Arial, sans-serif;
`;

const DataTip = styled.div`
  position: absolute;
  left: 462px;
  top: 326px;
  padding: 1px 12px 3px 5px;
  background: #fcfcfc;
  border: 1px solid #666;
  border-radius: 3px;
  box-shadow: 3px 3px 2px #999;
  color: #555;
  font-size: 11px;
  line-height: 15px;

  p {
    margin: 0;
  }
`;

const SheetBar = styled.div`
  display: flex;
  height: 17px;
`;

const NavButton = styled.button`
  display: flex;
  align-items: center;
  justify-content: center;
  width: 16px;
  border: solid #a8a8a8;
  border-width: 1px 1px 1px 0;
`;

const SheetCell = styled.span`
  display: flex;
`;

const SheetTab = styled.button<{ $active: boolean }>`
  width: ${(p) => (p.$active ? 49 : 44)}px;
  padding-bottom: 2px;
  border-top: 1px solid ${(p) => (p.$active ? "transparent" : "#a8a8a8")};
  border-bottom: 1px solid #a8a8a8;
  font-size: 11px;
  font-weight: ${(p) => (p.$active ? 700 : 400)};
  line-height: 13px;
  white-space: nowrap;
`;

const SortButton = styled.button`
  display: flex;
  align-items: center;
  gap: 1px;
  padding: 0 3px;
  border-right: 1px solid #a8a8a8;
  font: 9px "Liberation Sans", sans-serif;
`;

const ScrollTrack = styled.div`
  display: flex;
  flex: 1;
  align-items: center;
  padding: 0 4px;
`;

const ScrollThumb = styled.span`
  width: 21px;
  height: 15px;
  margin: 0 5px 0 auto;
  border: 1px solid #888;
  border-radius: 2px;
  background: linear-gradient(#f4f4f4 50%, #d0d4d8 50%);
  font: 9px/12px "Liberation Sans", sans-serif;
  text-align: center;
`;

const Toolbox = styled.aside`
  display: flex;
  flex-direction: column;
  width: 27px;
  border-left: 2px solid #87888f;
`;

const ToolGroup = styled.div<{ $grow?: boolean }>`
  display: flex;
  flex: ${(p) => (p.$grow ? 1 : "none")};
  flex-direction: column;
  padding-left: 1px;
`;

const Dots = styled.span`
  width: 14px;
  height: 2px;
  margin: 5px 0 3px 3px;
  background: repeating-linear-gradient(90deg, #a8a8a8 0 2px, transparent 2px 4px);
`;

const ToolboxMore = styled.button`
  margin-top: auto;
  padding: 9px 0 2px;
`;

const StatusBar = styled.footer`
  display: flex;
  align-items: center;
  height: 17px;
  padding-top: 1px;
  font-size: 11px;
  line-height: 16px;
`;

const StatusHelp = styled.span`
  flex: 1;
  padding-left: 2px;
`;

const StatusCell = styled.span<{ $width: number }>`
  display: flex;
  align-items: center;
  gap: 5px;
  width: ${(p) => p.$width}px;
  height: 15px;
  padding-left: 4px;
  border-right: 1px solid #c8c8c8;
  white-space: nowrap;
`;

const TaskBar = styled.div`
  display: flex;
  align-items: center;
  height: 31px;
  padding-right: 12px;
  background: linear-gradient(#55565a 0 1px, #96979b 1px, #7c7d80 12px, #4a4b4d 14px, #101113 17px);
  color: #fcfcfc;
`;

const StartButton = styled.button`
  display: flex;
  flex: none;
  align-items: center;
  justify-content: center;
  width: 40px;
  height: 38px;
  margin: 0 14px 0 10px;
  border: 2px solid #2a3440;
  border-radius: 50%;
  background: radial-gradient(circle at 50% 90%, #3cc8f4, #1c4c80 50%, #6c8cac 90%);
`;

const QuickLaunch = styled.div`
  display: flex;
  align-items: center;
  gap: 7px;

  button {
    display: flex;
    justify-content: center;
    width: 16px;
  }
`;

const TaskList = styled.div`
  display: flex;
  flex: 1;
  gap: 3px;
  padding-left: 81px;
`;

const TaskButton = styled.button<{ $active?: boolean }>`
  display: flex;
  align-items: center;
  gap: 5px;
  width: 157px;
  height: 28px;
  padding-left: 8px;
  border: 1px solid #77787a;
  border-radius: 3px;
  box-shadow: inset 0 0 0 1px ${(p) => (p.$active ? "#222" : "#555")};
  background: ${(p) =>
    p.$active
      ? "linear-gradient(#3c3d3f 45%, #0c0c0e 55%)"
      : "linear-gradient(#98999c, #6c6d70 40%, #2c2d2f 55%, #18191b)"};
  white-space: nowrap;
`;

const Language = styled.span`
  margin: 0 17px 4px 0;
  font-size: 11px;
`;

const Tray = styled.div<{ $first?: boolean }>`
  display: flex;
  align-items: center;
  gap: ${(p) => (p.$first ? 6 : 4)}px;
  margin-right: ${(p) => (p.$first ? 8 : 6)}px;
  padding-bottom: 2px;
`;

const Clock = styled.time`
  font-size: 11px;
`;
